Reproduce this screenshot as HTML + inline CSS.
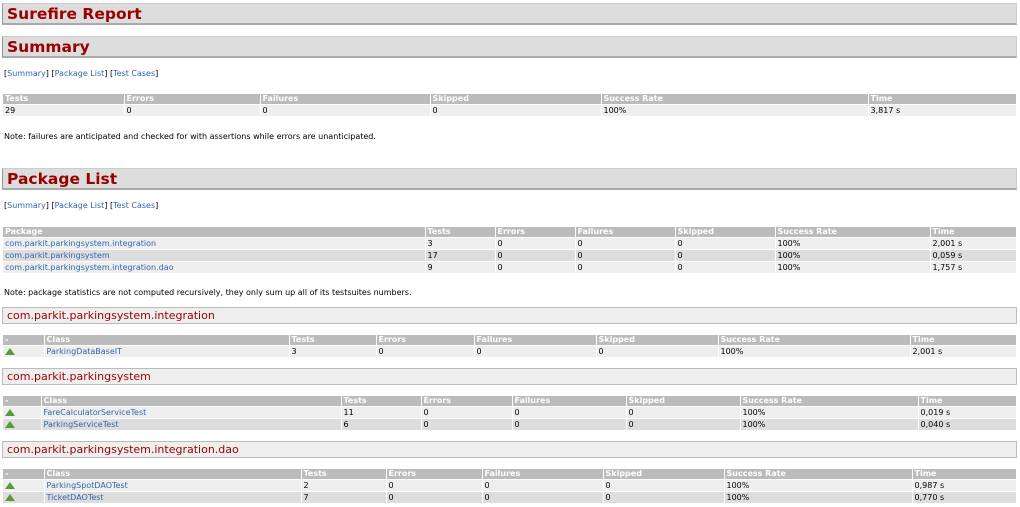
<!DOCTYPE html>
<html><head><meta charset="utf-8"><style>
body{margin:0;width:1020px;height:507px;background:#fff;font-family:Verdana,"DejaVu Sans","Liberation Sans",sans-serif;font-size:8px;color:#000;position:relative;overflow:hidden}
.h2{position:absolute;left:2px;width:1015px;background:#ddd;border:1px solid #999;border-width:1px 1px 2px 1px;border-color:#ccc #ccc #aaa #999;color:#900;font-weight:bold;font-size:15.5px;padding-left:4px;box-sizing:border-box;height:22px;line-height:20px}
.h3{position:absolute;left:2px;width:1015px;background:#eee;border:1px solid #bbb;color:#900;font-size:11px;padding-left:4px;box-sizing:border-box;height:17px;line-height:15px}
.lk{position:absolute;left:4px;font-size:8px;color:#000}
.lk a{color:#36a;text-decoration:none}
.nt{position:absolute;left:4px;font-size:8px}
table{position:absolute;left:3px;border-collapse:collapse;table-layout:fixed;font-size:8px}
td,th{padding:0 2px;height:11px;line-height:11px;text-align:left;white-space:nowrap;overflow:hidden;border-right:1px solid #fff;border-bottom:1px solid #fff}
td{height:11px}
th{background:#bbb;color:#fff;font-weight:bold;height:10px;line-height:10px}
tr.a td{background:#eee}tr.b td{background:#ddd}
td a{color:#36a;text-decoration:none}
.ic{display:inline-block;width:0;height:0;border-left:5px solid transparent;border-right:5px solid transparent;border-bottom:7px solid #5a9a3a;vertical-align:middle}
</style></head><body>
<div class="h2" style="top:3px">Surefire Report</div>
<div class="h2" style="top:36px">Summary</div>
<div class="lk" style="top:69px">[<a>Summary</a>] [<a>Package List</a>] [<a>Test Cases</a>]</div>
<table style="top:94px;width:1013px"><colgroup><col style="width:121px"><col style="width:136px"><col style="width:170px"><col style="width:171px"><col style="width:267px"><col style="width:148px"></colgroup>
<tr><th>Tests</th><th>Errors</th><th>Failures</th><th>Skipped</th><th>Success Rate</th><th>Time</th></tr>
<tr class="a"><td>29</td><td>0</td><td>0</td><td>0</td><td>100%</td><td>3,817 s</td></tr></table>
<div class="nt" style="top:132px">Note: failures are anticipated and checked for with assertions while errors are unanticipated.</div>
<div class="h2" style="top:168px">Package List</div>
<div class="lk" style="top:201px">[<a>Summary</a>] [<a>Package List</a>] [<a>Test Cases</a>]</div>
<table style="top:227px;width:1013px"><colgroup><col style="width:422px"><col style="width:70px"><col style="width:80px"><col style="width:100px"><col style="width:100px"><col style="width:155px"><col style="width:86px"></colgroup>
<tr><th>Package</th><th>Tests</th><th>Errors</th><th>Failures</th><th>Skipped</th><th>Success Rate</th><th>Time</th></tr>
<tr class="a"><td><a>com.parkit.parkingsystem.integration</a></td><td>3</td><td>0</td><td>0</td><td>0</td><td>100%</td><td>2,001 s</td></tr>
<tr class="b"><td><a>com.parkit.parkingsystem</a></td><td>17</td><td>0</td><td>0</td><td>0</td><td>100%</td><td>0,059 s</td></tr>
<tr class="a"><td><a>com.parkit.parkingsystem.integration.dao</a></td><td>9</td><td>0</td><td>0</td><td>0</td><td>100%</td><td>1,757 s</td></tr></table>
<div class="nt" style="top:288px">Note: package statistics are not computed recursively, they only sum up all of its testsuites numbers.</div>

<div class="h3" style="top:307px">com.parkit.parkingsystem.integration</div>
<table style="top:335px;width:1013px"><colgroup><col style="width:41px"><col style="width:245px"><col style="width:87px"><col style="width:98px"><col style="width:122px"><col style="width:122px"><col style="width:192px"><col style="width:106px"></colgroup>
<tr><th>-</th><th>Class</th><th>Tests</th><th>Errors</th><th>Failures</th><th>Skipped</th><th>Success Rate</th><th>Time</th></tr>
<tr class="a"><td><span class="ic"></span></td><td><a>ParkingDataBaseIT</a></td><td>3</td><td>0</td><td>0</td><td>0</td><td>100%</td><td>2,001 s</td></tr></table>

<div class="h3" style="top:368px">com.parkit.parkingsystem</div>
<table style="top:396px;width:1013px"><colgroup><col style="width:38px"><col style="width:300px"><col style="width:80px"><col style="width:91px"><col style="width:114px"><col style="width:114px"><col style="width:178px"><col style="width:98px"></colgroup>
<tr><th>-</th><th>Class</th><th>Tests</th><th>Errors</th><th>Failures</th><th>Skipped</th><th>Success Rate</th><th>Time</th></tr>
<tr class="a"><td><span class="ic"></span></td><td><a>FareCalculatorServiceTest</a></td><td>11</td><td>0</td><td>0</td><td>0</td><td>100%</td><td>0,019 s</td></tr>
<tr class="b"><td><span class="ic"></span></td><td><a>ParkingServiceTest</a></td><td>6</td><td>0</td><td>0</td><td>0</td><td>100%</td><td>0,040 s</td></tr></table>

<div class="h3" style="top:441px">com.parkit.parkingsystem.integration.dao</div>
<table style="top:469px;width:1013px"><colgroup><col style="width:41px"><col style="width:257px"><col style="width:85px"><col style="width:96px"><col style="width:121px"><col style="width:121px"><col style="width:188px"><col style="width:104px"></colgroup>
<tr><th>-</th><th>Class</th><th>Tests</th><th>Errors</th><th>Failures</th><th>Skipped</th><th>Success Rate</th><th>Time</th></tr>
<tr class="a"><td><span class="ic"></span></td><td><a>ParkingSpotDAOTest</a></td><td>2</td><td>0</td><td>0</td><td>0</td><td>100%</td><td>0,987 s</td></tr>
<tr class="b"><td><span class="ic"></span></td><td><a>TicketDAOTest</a></td><td>7</td><td>0</td><td>0</td><td>0</td><td>100%</td><td>0,770 s</td></tr></table>
</body></html>
